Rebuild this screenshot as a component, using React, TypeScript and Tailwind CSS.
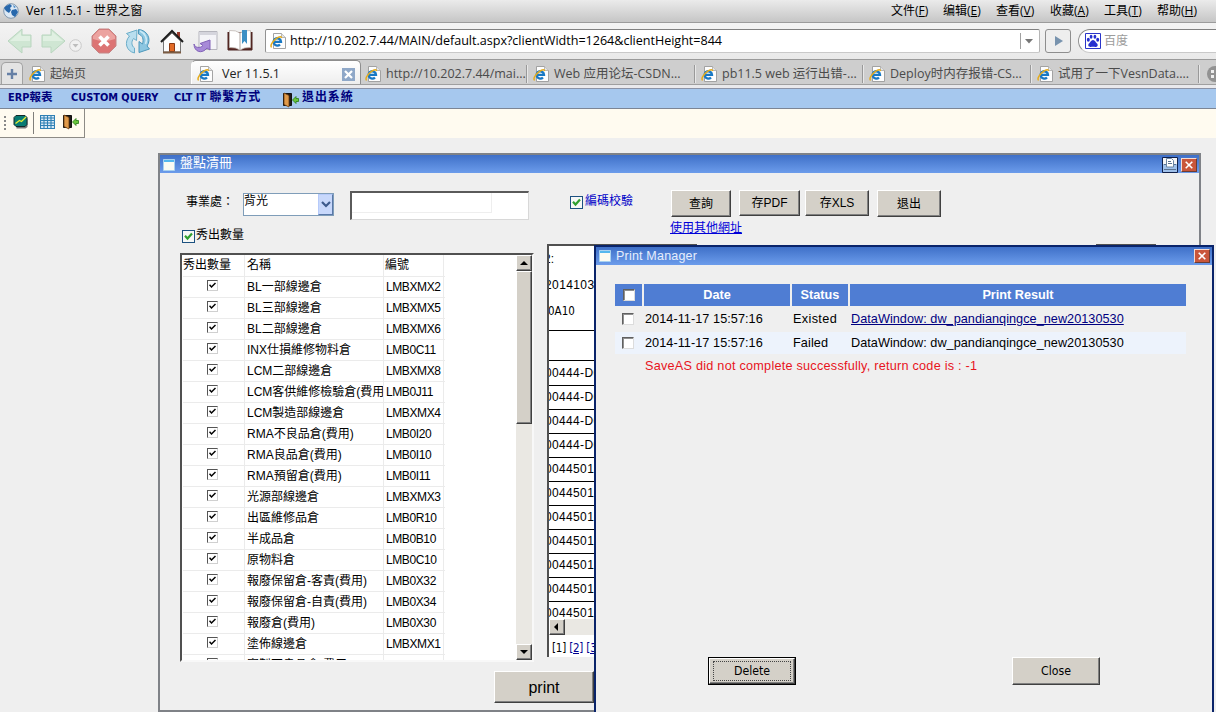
import React from 'react';

const SC = "font-['Open_Sans','Noto_Sans_CJK_SC',sans-serif]";
const TC = "font-['Liberation_Sans','Noto_Sans_CJK_TC',sans-serif]";
const TAHOMA = "font-['DejaVu_Sans_Condensed','Noto_Sans_CJK_TC',sans-serif]";

function IePage() {
  return (
    <svg width="16" height="16" viewBox="0 0 16 16" className="shrink-0">
      <path d="M3.5 .5h8l4 4v11h-12z" fill="#fdfdfd" stroke="#9a9a9a" strokeWidth=".9" />
      <path d="M11.5 .5v4h4" fill="#e4e4e4" stroke="#a8a8a8" strokeWidth=".8" />
      <path d="M10 11.500a3.700 3.700 0 1 1 1-2.700H4" fill="none" stroke="#1878c4" strokeWidth="2.300" />
      <path d="M1.600 14.300c-1.800-1.400 .9-6 4.900-8.900 2.800-2 5.400-2.200 4.700-.3" fill="none" stroke="#e5ac1e" strokeWidth="1.500" />
    </svg>
  );
}

function Globe() {
  return (
    <svg width="16" height="16" viewBox="0 0 16 16">
      <circle cx="8" cy="8" r="7.300" fill="#dce8f4" stroke="#8197ad" />
      <path d="M3 3l4-2 2 2-2 2 1 2-2 3-3-2-2-3zM9 7l4-1 2 3-3 5-3-2-1-3z" fill="#2868ac" />
      <path d="M10 2l3 2-2 1z" fill="#4689c6" />
    </svg>
  );
}

function Arrow({ flip = false }: { flip?: boolean }) {
  return (
    <svg width="26" height="26" viewBox="0 0 26 26" className={flip ? '-scale-x-100' : ''}>
      <path d="M1 13L15 1v6h9v12h-9v6z" fill="#cfe6d3" stroke="#b9d6bf" />
      <path d="M3 13L14 3.500V8h9v5z" fill="#e0f0e2" />
    </svg>
  );
}

function StopIcon() {
  return (
    <svg width="26" height="26" viewBox="0 0 26 26">
      <path d="M8 1h10l7 7v10l-7 7H8l-7-7V8z" fill="#dc7474" stroke="#c48686" strokeLinejoin="round" />
      <path d="M8 2h10l6 6v3Q13 15 2 11V8z" fill="#eca3a0" />
      <path d="M8.500 8.500l9 9m0-9l-9 9" stroke="#fff" strokeWidth="3.600" />
    </svg>
  );
}

function RefreshIcon() {
  return (
    <svg width="26" height="26" viewBox="0 0 26 26">
      <path d="M9.500 25C1 23 -1 14 4.500 8L1.500 5.500 12 2l-.5 10.500-3-2C6 14 6.500 18 9.500 20z" fill="#b9deee" stroke="#6badc9" strokeLinejoin="round" />
      <path d="M10 1.500c7-1.500 8.500 5 8 15l4-1.500-8 10-1.500-12" fill="none" />
      <path d="M13.500 1.500C22 2 27 11 22 18l2.500 3L14 24.500l0-11 3.500 2.500C19 11 17.500 7.500 13.500 6z" fill="#8cc6e1" stroke="#4e98bb" strokeLinejoin="round" />
      <path d="M15 3c5 2 8 8 5.500 13" fill="none" stroke="#cdeaf5" strokeWidth="1.500" />
    </svg>
  );
}

function HomeIcon() {
  return (
    <svg width="24" height="25" viewBox="0 0 24 25">
      <path d="M17 3h3v6h-3z" fill="#993a2c" />
      <path d="M3.500 12L12 4l8.500 8v11h-17z" fill="#fdfdfd" stroke="#777" />
      <path d="M1 13L12 2l11 11" fill="none" stroke="#1c1c1c" strokeWidth="2" />
      <path d="M9.500 14.500h5v8h-5z" fill="#e26b27" stroke="#8a3a14" />
      <path d="M3 23.500h18" stroke="#7a5b42" strokeWidth="2" />
    </svg>
  );
}

function RestoreIcon() {
  return (
    <svg width="25" height="25" viewBox="0 0 25 25">
      <path d="M6 2.500h18v18H6z" fill="#f4f4f8" stroke="#b5b5bd" />
      <path d="M6.500 3h17v3h-17z" fill="#d5d5dd" />
      <path d="M1 15c1 4 6 4.500 9 1.500l-3-2 10-3.500v10l-3-2C9 25.500 1 23 1 15z" fill="#a78ad8" stroke="#8263b8" />
    </svg>
  );
}

function BookIcon() {
  return (
    <svg width="26" height="24" viewBox="0 0 26 24">
      <path d="M1 3v18h24V3" fill="#5b2a25" stroke="#4a2320" />
      <path d="M2.500 1.500Q9 1 13 4v17q-4-3-10.500-2.500zM23.500 1.500Q17 1 13 4v17q4-3 10.500-2.500z" fill="#fff" stroke="#c0b9b4" strokeWidth=".8" />
      <path d="M15 1h5v14l-2.500-3-2.500 3z" fill="#3c8fc4" />
    </svg>
  );
}

function Door() {
  return (
    <svg width="17" height="16" viewBox="0 0 17 16" className="shrink-0">
      <path d="M1.500 1.500h8v12h-8z" fill="#211a1a" stroke="#111" />
      <path d="M2 1l5 2.500V15l-5-2.500z" fill="#e09a4a" stroke="#6b3d12" strokeWidth=".8" />
      <path d="M10.500 8l3.500-3.500v2h2.500v3H14v2z" fill="#69c63c" stroke="#267a16" strokeWidth=".8" />
    </svg>
  );
}

function Paw() {
  return (
    <svg width="16" height="16" viewBox="0 0 16 16" className="shrink-0">
      <path d="M.5.5h15v15H.5z" fill="#fff" stroke="#2b35c8" />
      <g fill="#2630d0">
        <ellipse cx="3.300" cy="6.800" rx="1.500" ry="2" />
        <ellipse cx="6.100" cy="3.800" rx="1.400" ry="2" />
        <ellipse cx="9.900" cy="3.800" rx="1.400" ry="2" />
        <ellipse cx="12.700" cy="6.800" rx="1.500" ry="2" />
        <path d="M8 7c2 0 2.500 2.300 4 3.600 1.600 1.700.3 3.800-1.700 3.400-1.600-.3-3-.3-4.600 0-2 .4-3.300-1.700-1.700-3.400C5.500 9.300 6 7 8 7z" />
      </g>
    </svg>
  );
}

function WinIcon() {
  return (
    <svg width="12" height="12" viewBox="0 0 12 12" className="shrink-0">
      <path d="M.5.5h11v11H.5z" fill="#fbfbf2" stroke="#a9d2f0" />
      <path d="M1 1h10v2H1z" fill="#55b8ee" />
    </svg>
  );
}

function CloseBox() {
  return (
    <div className="flex h-[14px] w-4 shrink-0 items-center justify-center border border-t-[#f6dcd2] border-l-[#f6dcd2] border-r-[#6b3c34] border-b-[#6b3c34] bg-[#c9563a]">
      <svg width="8" height="8" viewBox="0 0 8 8"><path d="M.7.7l6.600 6.600m0-6.600L.7 7.300" stroke="#fff" strokeWidth="1.600" /></svg>
    </div>
  );
}

function GreenCheck() {
  return (
    <span className="flex size-[13px] shrink-0 items-center justify-center border border-[#1c5180] bg-[#f6f8f6]">
      <svg width="9" height="9" viewBox="0 0 9 9"><path d="M1 3.800l2.500 2.700L8 1.500" fill="none" stroke="#2fa02f" strokeWidth="2.200" /></svg>
    </span>
  );
}

function SmallCheck() {
  return (
    <span className="flex size-[11px] items-center justify-center border border-t-[#555] border-l-[#555] border-r-[#d0d0d0] border-b-[#d0d0d0] bg-white">
      <svg width="7" height="7" viewBox="0 0 7 7"><path d="M.5 2.800l2 2.200 4-4" fill="none" stroke="#000" strokeWidth="1.500" /></svg>
    </span>
  );
}

function EmptyCheck() {
  return <span className="block size-3 border border-t-[#606060] border-l-[#606060] border-r-[#dcdcdc] border-b-[#dcdcdc] bg-white shadow-[inset_1px_1px_0_#909090]" />;
}

function ScrollButton({ dir }: { dir: 'up' | 'down' | 'left' }) {
  const d = { up: 'M0 6L4 2l4 4z', down: 'M0 2l4 4 4-4z', left: 'M5 0L1 4l4 4z' }[dir];
  return (
    <div className="flex h-4 w-4 shrink-0 items-center justify-center border border-t-white border-l-white border-r-[#404040] border-b-[#404040] bg-[#d4d0c8] shadow-[inset_-1px_-1px_0_#808080]">
      <svg width="8" height="8" viewBox="0 0 8 8"><path d={d} /></svg>
    </div>
  );
}

function Button({ className, children }: { className: string; children: React.ReactNode }) {
  return (
    <button className={`shrink-0 border border-t-white border-l-white border-r-[#404040] border-b-[#404040] bg-[#d4d0c8] text-center text-black shadow-[inset_-1px_-1px_0_#808080] ${className}`}>
      {children}
    </button>
  );
}

const menus: [string, string][] = [
  ['文件', 'F'], ['编辑', 'E'], ['查看', 'V'], ['收藏', 'A'], ['工具', 'T'], ['帮助', 'H'],
];
const menuWidths = ['w-[52px]', 'w-[53px]', 'w-[54px]', 'w-[54px]', 'w-[53px]', 'w-[45px]'];

const tabs = [
  'http://10.202.7.44/mai...',
  'Web 应用论坛-CSDN...',
  'pb11.5 web 运行出错-...',
  'Deploy时内存报错-CS...',
  '试用了一下VesnData....',
];

const rows: [string, string][] = [
  ['BL一部線邊倉', 'LMBXMX2'],
  ['BL三部線邊倉', 'LMBXMX5'],
  ['BL二部線邊倉', 'LMBXMX6'],
  ['INX仕損維修物料倉', 'LMB0C11'],
  ['LCM二部線邊倉', 'LMBXMX8'],
  ['LCM客供維修檢驗倉(費用', 'LMB0J11'],
  ['LCM製造部線邊倉', 'LMBXMX4'],
  ['RMA不良品倉(費用)', 'LMB0I20'],
  ['RMA良品倉(費用)', 'LMB0I10'],
  ['RMA預留倉(費用)', 'LMB0I11'],
  ['光源部線邊倉', 'LMBXMX3'],
  ['出區維修品倉', 'LMB0R10'],
  ['半成品倉', 'LMB0B10'],
  ['原物料倉', 'LMB0C10'],
  ['報廢保留倉-客責(費用)', 'LMB0X32'],
  ['報廢保留倉-自責(費用)', 'LMB0X34'],
  ['報廢倉(費用)', 'LMB0X30'],
  ['塗佈線邊倉', 'LMBXMX1'],
  ['實製不良品倉(費用)', 'LMB1X30'],
];

const parts = ['00444-D0', '00444-D0', '00444-D0', '00444-D0', '0044501', '0044501', '0044501', '0044501', '0044501', '0044501', '0044501'];

function BrowserChrome() {
  return (
    <header className={SC}>
      <div className="flex h-[23px] items-center border-b border-[#9b9b9b] bg-linear-to-b from-[#ebebeb] to-[#c6c6c6] pl-[3px] text-black">
        <Globe />
        <span className="ml-[7px] text-[12.300px]">Ver 11.5.1 - 世界之窗</span>
        <nav className="ml-auto flex pr-[14px] text-[12px]">
          {menus.map(([name, key], i) => (
            <span key={key} className={`${menuWidths[i]} whitespace-nowrap`}>{name}(<u>{key}</u>)</span>
          ))}
        </nav>
      </div>
      <div className="flex h-9 items-center bg-linear-to-b from-[#f3f3f3] to-[#e9e9e9]">
        <div className="ml-[7px]"><Arrow /></div>
        <div className="ml-[7px]"><Arrow flip /></div>
        <svg width="13" height="13" viewBox="0 0 13 13" className="mt-2 ml-[3px]">
          <circle cx="6.500" cy="6.500" r="5.800" fill="#f1f1f1" stroke="#c9c9c9" />
          <path d="M3.500 5h6l-3 3.500z" fill="#bdbdbd" />
        </svg>
        <div className="ml-[9px]"><StopIcon /></div>
        <div className="ml-[8px]"><RefreshIcon /></div>
        <div className="ml-[9px]"><HomeIcon /></div>
        <div className="ml-[9px]"><RestoreIcon /></div>
        <div className="ml-[9px]"><BookIcon /></div>
        <div className="ml-[12px] flex h-6 w-[775px] shrink-0 items-center rounded-[2px] border border-t-[#808080] border-l-[#929292] border-r-[#b5b5b5] border-b-[#c9c9c9] bg-white pl-1">
          <IePage />
          <span className="ml-[4px] text-[12.600px] tracking-[-0.030px] text-black">http://10.202.7.44/MAIN/default.aspx?clientWidth=1264&amp;clientHeight=844</span>
          <div className="ml-auto flex h-4 w-[19px] items-center border-l border-[#a0a0a0] pl-1">
            <svg width="8" height="5"><path d="M0 0h8L4 4.500z" fill="#777" /></svg>
          </div>
        </div>
        <div className="ml-[5px] flex h-6 w-[26px] shrink-0 items-center justify-center rounded-[3px] border border-[#8e8e8e] bg-[#eeeeee]">
          <svg width="9" height="10"><path d="M1 0l8 5-8 5z" fill="#7893ae" /></svg>
        </div>
        <div className="ml-[7px] flex h-6 flex-1 items-center rounded-l-full border border-r-0 border-t-[#808080] border-l-[#929292] border-b-[#c9c9c9] bg-white pl-[6px]">
          <Paw />
          <span className="ml-[3px] text-[12px] text-[#9c9c9c]">百度</span>
        </div>
      </div>
      <div className="flex h-[26px] overflow-hidden border-t border-b border-t-[#9a9a9a] border-b-[#9f9f9f] bg-[#cecece] text-[12.500px] text-[#4b4b4b]">
        <div className="mt-[2px] ml-px flex w-[22px] shrink-0 items-center justify-center rounded-t-[5px] border border-b-0 border-[#a2a2a2] bg-[#e4e4e4]">
          <svg width="10" height="10"><path d="M5 0v10M0 5h10" stroke="#6680a6" strokeWidth="2.400" /></svg>
        </div>
        <div className="flex w-[168px] shrink-0 items-center pt-[4px] pl-[6px]">
          <IePage /><span className="ml-[5px] text-[12px]">起始页</span>
        </div>
        <div className="flex w-[170px] shrink-0 items-center rounded-t-[5px] border border-t-[#8e8e8e] border-l-white border-r-[#8e8e8e] border-b-0 bg-linear-to-b from-white to-[#eeeeee] pt-[3px] pl-[5px] text-[#222]">
          <IePage /><span className="ml-[9px]">Ver 11.5.1</span>
          <span className="mr-[5px] ml-auto flex size-[13px] items-center justify-center bg-[#8fa8c8]">
            <svg width="9" height="9"><path d="M1 1l7 7m0-7L1 8" stroke="#fff" strokeWidth="2.200" /></svg>
          </span>
        </div>
        {tabs.map((label, i) => (
          <div key={label} className={`flex h-full shrink-0 items-center pt-[4px] ${i === 0 ? 'w-[167px] pl-1' : 'w-[168px] pl-[5px]'}`}>
            <IePage />
            <span className="ml-[5px] whitespace-nowrap">{label}</span>
            <i className="ml-auto h-[18px] w-[2px] border-l border-[#999] bg-[#e8e8e8]" />
          </div>
        ))}
        <svg width="16" height="16" viewBox="0 0 16 16" className="mt-[6px] ml-[7px] shrink-0">
          <circle cx="8" cy="8" r="8" fill="#929292" /><path d="M4 4h3v3H4zM9 4h3v3H9zM4 9h3v3H4zM9 9h3v3H9z" fill="#eee" />
        </svg>
      </div>
    </header>
  );
}

function AppMenu() {
  return (
    <>
      <div className="h-[3px] bg-[#e9e9ec]" />
      <div className={`flex h-[21px] border-t border-b border-t-[#8c93a6] border-b-[#7c8594] bg-[#a6c8ee] pl-[8px] text-[10.900px] leading-[17px] font-bold whitespace-nowrap text-[#00007c] ${TAHOMA}`}>
        <span className="w-[63px]">ERP<span className="text-[11.500px]">報表</span></span>
        <span className="w-[103px]">CUSTOM QUERY</span>
        <span className="w-[108px]">CLT IT <span className="text-[12px] tracking-[0.900px]">聯繫方式</span></span>
        <span className="pt-[3px]"><Door /></span>
        <span className="ml-[3px] text-[12px] leading-[16px] tracking-[0.900px]">退出系統</span>
      </div>
      <div className="flex h-[29px] bg-[#fffbf0]">
        <div className="flex w-[85px] items-center border-r border-b border-[#8d8b86] pl-1">
          <i className="h-[14px] border-l-2 border-dotted border-[#888]" />
          <svg width="15" height="15" viewBox="0 0 15 15" className="mb-[3px] ml-[7px]">
            <path d="M3 3h10l1.500 2v8l-2 1.500h-9z" fill="#777" />
            <path d="M3 1.500h9l2 2v7l-2 2H3l-2-2v-7z" fill="#087a72" stroke="#132a2a" />
            <path d="M2.500 9.500l4-3 2 1 4.500-4.500" fill="none" stroke="#e9ef31" strokeWidth="1.300" />
          </svg>
          <i className="ml-[5px] h-[22px] w-px bg-[#807f7b]" />
          <svg width="15" height="14" viewBox="0 0 15 14" className="mb-[3px] ml-[6px]">
            <path d="M.5.500h14v13H.5zM0 3h15M0 5.500h15M0 8h15M0 10.500h15M4 0v14M7.500 0v14M11 0v14" fill="#dcebf7" stroke="#3080b4" strokeWidth="1.100" />
          </svg>
          <div className="mb-[3px] ml-[7px]"><Door /></div>
        </div>
      </div>
    </>
  );
}

function WarehouseList() {
  return (
    <div className="flex h-[409px] w-[354px] border-2 border-t-[#505050] border-l-[#505050] border-r-[#f8f8f8] border-b-[#f8f8f8] bg-white">
      <div className="h-full flex-1 overflow-hidden pl-px text-[12px] leading-[20px] whitespace-nowrap text-black">
        <div className="flex h-[22px] w-[262px] border-b border-[#ebebeb]">
          <span className="w-[61px]">秀出數量</span>
          <span className="w-[139px] border-l border-[#ebebeb] pl-[2px]">名稱</span>
          <span className="w-[61px] border-x border-[#ebebeb] pl-px">編號</span>
        </div>
        {rows.map(([name, code]) => (
          <div key={code + name} className="flex h-[21px] w-[262px] border-b border-[#ebebeb]">
            <span className="flex w-[61px] justify-center pt-[3px] pr-[2px]"><SmallCheck /></span>
            <span className="w-[139px] overflow-hidden border-l border-[#ebebeb] pl-[2px]">{name}</span>
            <span className="w-[61px] border-x border-[#ebebeb] pl-[2px] tracking-[-0.400px]">{code}</span>
          </div>
        ))}
      </div>
      <div className="flex w-4 flex-col bg-[#eae8e3]">
        <ScrollButton dir="up" />
        <div className="h-[153px] border border-t-white border-l-white border-r-[#404040] border-b-[#404040] bg-[#d4d0c8] shadow-[inset_-1px_-1px_0_#808080]" />
        <div className="mt-auto"><ScrollButton dir="down" /></div>
      </div>
    </div>
  );
}

function ReportPane() {
  return (
    <div>
      <div className="flex w-[609px] justify-between">
        <i className="h-[2px] w-[150px] bg-[#505050]" /><i className="h-[2px] w-[60px] bg-[#505050]" />
      </div>
      <div className="h-[411px] w-[150px] overflow-hidden border-l-2 border-[#505050] bg-white text-[12px] text-black">
        <div className="h-[85px] border-b border-black">
          <p className="-ml-[5px] h-[26px] leading-[26px]">2:</p>
          <p className="-ml-[4px] h-[26px] leading-[26px] tracking-[0.400px]">20141030</p>
          <p className={`-ml-[1px] h-[26px] text-[11.500px] leading-[26px] ${TAHOMA}`}>0A10</p>
        </div>
        <div className="h-[30px] border-b border-black" />
        {parts.map((p, i) => (
          <div key={i} className={`-ml-[4px] border-b border-black tracking-[0.350px] ${i === 0 ? 'h-[25px] leading-[25px]' : i === 10 ? 'h-[12px] leading-[22px] border-b-0' : 'h-6 leading-[23px]'}`}>{p}</div>
        ))}
        <div className="relative mt-[5px] flex h-4 bg-[#eae8e3]"><ScrollButton dir="left" /></div>
        <p className={`mt-[2px] ml-[3px] text-[11.500px] leading-[22px] tracking-[-0.200px] ${TAHOMA}`}>[1] <u className="text-[#000090]">[2]</u> <u className="text-[#000090]">[3]</u></p>
      </div>
    </div>
  );
}

function MainWindow() {
  return (
    <section className={`absolute top-[153px] left-[158px] h-[559px] w-[1043px] border-2 border-[#7f8287] bg-[#efefef] ${TC}`}>
      <div className="flex h-[18px] items-center bg-linear-to-b from-[#3f70c8] to-[#6c9ceb] pr-[2px] pl-[3px]">
        <div className="mt-[2px]"><WinIcon /></div>
        <span className="ml-[5px] pb-[3px] text-[13px] leading-4 text-white">盤點清冊</span>
        <svg width="16" height="16" viewBox="0 0 16 16" className="mt-[1px] ml-auto">
          <path d="M.5.500h15v15H.5z" fill="#9fc0ea" stroke="#10204a" />
          <path d="M1 1h14v6H1z" fill="#f5f5f5" />
          <path d="M4.500 1.500h5l2 2V10h-7z" fill="#fff" stroke="#6d86a3" />
          <path d="M6 4.500h3M6 6.500h4M2 7.500h2M12 7.500h2M2 12.500h12" stroke="#5a7290" />
        </svg>
        <div className="mt-[1px] ml-[3px]"><CloseBox /></div>
      </div>
      <div className="flex h-[49px] items-start pl-[26px] text-[12px] text-black">
        <span className="mt-[20px] w-[57px] leading-[18px]">事業處：</span>
        <div className="mt-[20px] flex h-[23px] w-[91px] border border-[#7f9db9] bg-white leading-[14px]">
          <span className="flex-1">背光</span>
          <span className="flex w-[15px] items-center justify-center border border-t-[#b6cafa] border-r-[#5a78a8] border-b-[#5a78a8] border-l-[#b6cafa] bg-[#c8d8fb]">
            <svg width="10" height="7"><path d="M1 1l4 4 4-4" fill="none" stroke="#3d5a8c" strokeWidth="2.200" /></svg>
          </span>
        </div>
        <div className="mt-[18px] ml-[16px] h-[29px] w-[179px] border-2 border-t-[#5a5a5a] border-r border-b border-l-[#5a5a5a] border-r-[#d8d8d8] border-b-[#d8d8d8] bg-white">
          <div className="h-[20px] w-[140px] border-r border-b border-[#eeeeee]" />
        </div>
        <div className="mt-[19px] ml-[41px] flex w-[101px] text-[#0000c8]">
          <span className="mt-[4px]"><GreenCheck /></span><span className="ml-[2px] leading-[18px]">編碼校驗</span>
        </div>
        <Button className="mt-[17px] h-[27px] w-[60px]">查詢</Button>
        <Button className="mt-[17px] ml-[8px] h-[26px] w-[61px]">存PDF</Button>
        <Button className="mt-[17px] ml-[5px] h-[26px] w-[64px]">存XLS</Button>
        <Button className="mt-[17px] ml-[8px] h-[27px] w-[64px]">退出</Button>
      </div>
      <div className="flex pl-[20px]">
        <div>
          <div className="flex h-[31px] pl-[2px] text-[12px] text-black">
            <span className="mt-[8px]"><GreenCheck /></span><span className="mt-[4px] ml-px leading-[19px]">秀出數量</span>
          </div>
          <WarehouseList />
        </div>
        <div className="ml-[13px]">
          <div className="h-[22px] pl-[123px] text-[12px] leading-[13px] text-[#0000d8] underline">使用其他網址</div>
          <ReportPane />
        </div>
      </div>
      <div className="flex pt-[9px] pl-[334px]">
        <Button className="h-8 w-[100px] pt-px text-[16px]">print</Button>
      </div>
    </section>
  );
}

function PrintManager() {
  const head = 'flex items-center justify-center bg-[#4f7dd3] font-bold text-white';
  return (
    <section className={`absolute top-[245px] left-[594px] h-[467px] w-[620px] border-2 border-b-0 border-[#0a246a] bg-[#efefef] ${TC}`}>
      <div className="flex h-[18px] items-center bg-linear-to-b from-[#3f70c8] to-[#6c9ceb] pr-[2px] pl-[3px]">
        <WinIcon />
        <span className="ml-[5px] pt-px text-[12.500px] tracking-[0.200px] text-[#e6eefc]">Print Manager</span>
        <div className="ml-auto"><CloseBox /></div>
      </div>
      <div className="mt-[19px] ml-[19px] w-[571px] text-[12.700px] text-black">
        <div className="grid h-[22px] grid-cols-[27px_146px_56px_336px] gap-x-[2px]">
          <div className={head}><EmptyCheck /></div>
          <div className={`${head} pt-[2px]`}>Date</div>
          <div className={`${head} pt-[2px]`}>Status</div>
          <div className={`${head} pt-[2px]`}>Print Result</div>
        </div>
        <div className="mt-[2px] grid h-[22px] grid-cols-[30px_148px_58px_335px] items-center pt-[2px]">
          <div className="-mt-[3px] pl-[7px]"><EmptyCheck /></div>
          <span className="tracking-[0.050px]">2014-11-17 15:57:16</span><span className="tracking-[0.350px]">Existed</span>
          <span className="tracking-[0.030px] text-[#000080] underline">DataWindow: dw_pandianqingce_new20130530</span>
        </div>
        <div className="mt-[2px] grid h-[22px] grid-cols-[30px_148px_58px_335px] items-center bg-[#edf3fc] pt-[2px]">
          <div className="-mt-[3px] pl-[7px]"><EmptyCheck /></div>
          <span className="tracking-[0.050px]">2014-11-17 15:57:16</span><span className="tracking-[0.100px]">Failed</span>
          <span className="tracking-[0.030px]">DataWindow: dw_pandianqingce_new20130530</span>
        </div>
        <p className="pl-[30px] leading-[24px] tracking-[0.230px] text-[#e8141c]">SaveAS did not complete successfully, return code is : -1</p>
      </div>
      <div className={`mt-[279px] ml-[112px] flex gap-[216px] text-[12.200px] ${TAHOMA}`}>
        <div className="border border-black">
          <Button className="flex h-[26px] w-[86px] items-center justify-center">
            <span className="flex h-[20px] w-[78px] items-center justify-center border border-dotted border-[#444]">Delete</span>
          </Button>
        </div>
        <Button className="h-7 w-[88px]">Close</Button>
      </div>
    </section>
  );
}

export default function App() {
  return (
    <main className="relative h-[712px] w-[1216px] overflow-hidden bg-[#efefef]">
      <BrowserChrome />
      <AppMenu />
      <MainWindow />
      <PrintManager />
    </main>
  );
}
